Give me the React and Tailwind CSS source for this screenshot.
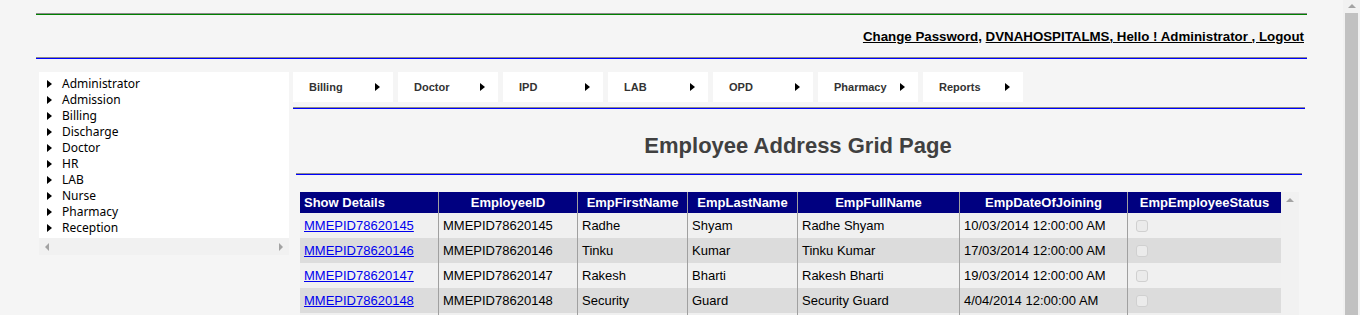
import React from "react";

const sideItems = ["Administrator","Admission","Billing","Discharge","Doctor","HR","LAB","Nurse","Pharmacy","Reception"];
const menuItems = ["Billing","Doctor","IPD","LAB","OPD","Pharmacy","Reports"];
const headers = ["EmployeeID","EmpFirstName","EmpLastName","EmpFullName","EmpDateOfJoining","EmpEmployeeStatus"];
const rows = [
  ["MMEPID78620145","Radhe","Shyam","Radhe Shyam","10/03/2014 12:00:00 AM"],
  ["MMEPID78620146","Tinku","Kumar","Tinku Kumar","17/03/2014 12:00:00 AM"],
  ["MMEPID78620147","Rakesh","Bharti","Rakesh Bharti","19/03/2014 12:00:00 AM"],
  ["MMEPID78620148","Security","Guard","Security Guard","4/04/2014 12:00:00 AM"],
];

const cols = "grid grid-cols-[138px_139px_110px_110px_162px_168px_154px]";

function RightTri({ cls = "border-l-black" }) {
  return <span className={`inline-block h-0 w-0 border-y-[4px] border-y-transparent border-l-[5px] ${cls}`} />;
}

export default function App() {
  return (
    <div className="flex h-[315px] w-[1360px] overflow-hidden bg-[#f5f5f5] font-['Liberation_Sans',Arial,sans-serif]">
      <div className="w-[1343px] shrink-0 px-[36px] pt-[13px]">
        <div className="h-[2px] border-t border-[#8a8a8a] bg-[#008000]" />
        <div className="flex h-[42px] items-center justify-end pr-[3px] pt-[1px] text-[13.3px] font-bold text-black">
          <span className="underline">Change Password,</span>
          <span>&nbsp;</span>
          <span className="underline">DVNAHOSPITALMS, Hello ! Administrator , Logout</span>
        </div>
        <div className="h-[2px] border-t border-[#8a8a8a] bg-[#0000ff]" />

        <div className="mt-[13px] flex">
          {/* Sidebar */}
          <div className="ml-[3px] w-[250px] shrink-0">
            <div className="bg-white pb-[2px] pt-[4px] pl-[8px] font-['Noto_Sans',sans-serif] text-[12px] text-black">
              {sideItems.map((s) => (
                <div key={s} className="flex h-[16px] items-center">
                  <RightTri />
                  <span className="ml-[10px]">{s}</span>
                </div>
              ))}
            </div>
            <div className="flex h-[17px] items-center justify-between bg-[#f1f1f1] px-[6px]">
              <span className="inline-block h-0 w-0 border-y-[4px] border-y-transparent border-r-[4px] border-r-[#a3a3a3]" />
              <span className="inline-block h-0 w-0 border-y-[4px] border-y-transparent border-l-[4px] border-l-[#a3a3a3]" />
            </div>
          </div>

          {/* Main */}
          <div className="ml-[4px] flex-1">
            <div className="flex gap-[5px]">
              {menuItems.map((m) => (
                <div key={m} className="flex h-[30px] w-[100px] items-center justify-between bg-white pl-[16px] pr-[13px] text-[11px] font-bold text-[#333]">
                  <span>{m}</span>
                  <RightTri />
                </div>
              ))}
            </div>
            <div className="mr-[2px] mt-[5px] h-[2px] border-t border-[#8a8a8a] bg-[#0000ff]" />
            <div className="flex h-[64px] items-center justify-center pt-[8px] pr-[4px] text-[22px] font-bold text-[#404040]">
              Employee Address Grid Page
            </div>
            <div className="ml-[3px] mr-[5px] h-[2px] border-t border-[#8a8a8a] bg-[#0000ff]" />

            <div className="ml-[7px] mt-[17px] flex">
              <div className="w-[981px] text-[13px]">
                <div className={`${cols} h-[21px] bg-[#000080] font-bold text-white`}>
                  <div className="flex items-center pl-[4px]">Show Details</div>
                  {headers.map((h) => (
                    <div key={h} className="flex items-center justify-center border-l border-[#a0a0a0]">{h}</div>
                  ))}
                </div>
                {rows.map((r, i) => (
                  <div key={r[0]} className={`${cols} h-[25px] text-black ${i % 2 === 0 ? "bg-[#f0f0f0]" : "bg-[#dcdcdc]"}`}>
                    <div className="flex items-center pl-[4px]">
                      <span className="text-[#0000ee] underline">{r[0]}</span>
                    </div>
                    {r.map((c, j) => (
                      <div key={j} className="flex items-center border-l border-[#a0a0a0] pl-[4px]">{c}</div>
                    ))}
                    <div className="flex items-center border-l border-[#a0a0a0] pl-[8px]">
                      <span className="inline-block h-[12px] w-[12px] rounded-[3px] border border-[#d0d0d0] bg-[#ebebeb]" />
                    </div>
                  </div>
                ))}
                <div className={`${cols} h-[25px] bg-[#f0f0f0]`}>
                  <div />
                  <div className="border-l border-[#a0a0a0]" />
                  <div className="border-l border-[#a0a0a0]" />
                  <div className="border-l border-[#a0a0a0]" />
                  <div className="border-l border-[#a0a0a0]" />
                  <div className="border-l border-[#a0a0a0]" />
                  <div className="border-l border-[#a0a0a0]" />
                </div>
              </div>
              <div className="flex h-[140px] w-[18px] justify-center bg-[#f1f1f1] pt-[6px]">
                <span className="inline-block h-0 w-0 border-x-[4px] border-x-transparent border-b-[4px] border-b-[#a3a3a3]" />
              </div>
            </div>
          </div>
        </div>
      </div>

      {/* Page scrollbar */}
      <div className="flex w-[17px] shrink-0 flex-col bg-[#f1f1f1]">
        <div className="flex h-[17px] items-center justify-center">
          <span className="inline-block h-0 w-0 border-x-[4px] border-x-transparent border-b-[4px] border-b-[#a3a3a3]" />
        </div>
        <div className="ml-[2px] h-[400px] w-[13px] bg-[#c1c1c1]" />
      </div>
    </div>
  );
}
